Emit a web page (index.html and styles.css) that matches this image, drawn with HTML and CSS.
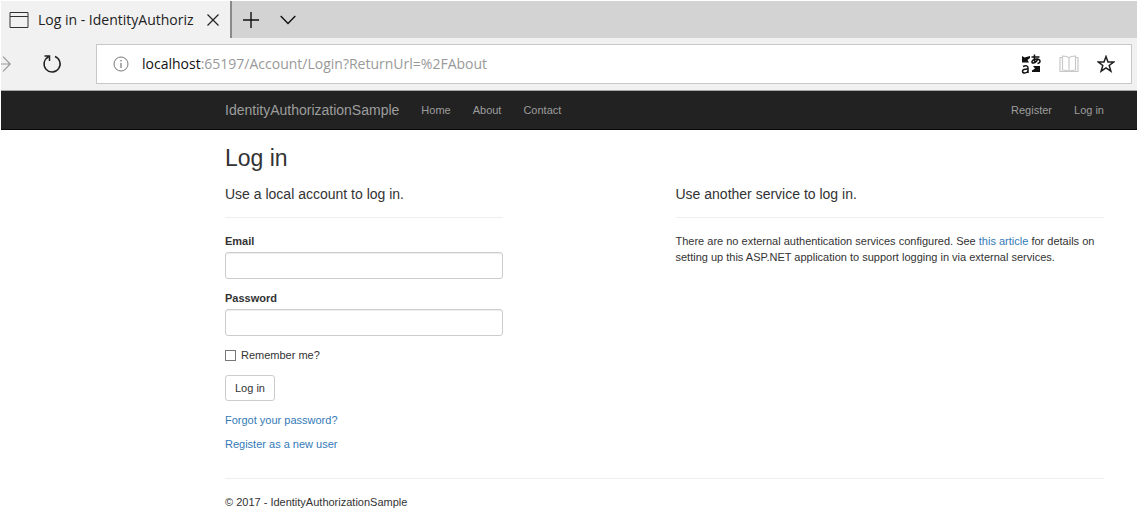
FILE: index.html
```html
<!DOCTYPE html>
<html lang="en">
<head>
<meta charset="utf-8">
<meta name="viewport" content="width=device-width, initial-scale=1">
<title>Log in - IdentityAuthorizationSample</title>
<link rel="stylesheet" href="styles.css">
</head>
<body>
<header class="browser">
  <div class="tabs">
    <div class="tab">
      <svg class="tab-icon" width="20" height="16" viewBox="0 0 20 16" fill="none" stroke="#333"><path d="M1 .5h18v15H1zM1 4.500h18"/></svg>
      <span class="tab-title">Log in - IdentityAuthorizationSample</span>
      <button class="icon-button" aria-label="Close tab"><svg width="12" height="12" viewBox="0 0 12 12" fill="none" stroke="#222" stroke-width="1.200"><path d="M.5.5l11 11M11.500.5l-11 11"/></svg></button>
    </div>
    <button class="icon-button new-tab" aria-label="New tab"><svg width="16" height="16" viewBox="0 0 16 16" fill="none" stroke="#111" stroke-width="1.400"><path d="M8 0v16M0 8h16"/></svg></button>
    <button class="icon-button tab-list" aria-label="Tab list"><svg width="16" height="10" viewBox="0 0 16 10" fill="none" stroke="#111" stroke-width="1.400"><path d="M.7 1L8 8.500 15.300 1"/></svg></button>
  </div>
  <div class="toolbar">
    <button class="icon-button forward" aria-label="Forward"><svg width="10" height="16" viewBox="0 0 10 16" fill="none" stroke="#999" stroke-width="1.200"><path d="M0 8h9M2 .7L9.200 8 2 15.300"/></svg></button>
    <button class="icon-button reload" aria-label="Refresh"><svg width="20" height="20" viewBox="0 0 20 20" fill="none" stroke="#222" stroke-width="1.500"><path d="M13 2.500a8 8 0 1 1-6.500.3M2.500 2h5v5"/></svg></button>
    <div class="address">
      <svg width="16" height="16" viewBox="0 0 16 16" fill="none" stroke="#777"><circle cx="8" cy="8" r="7"/><path d="M8 7v5M8 4v1.500" stroke-width="1.200"/></svg>
      <span class="url"><span class="host">localhost</span>:65197/Account/Login?ReturnUrl=%2FAbout</span>
      <button class="icon-button" aria-label="Translate"><svg width="20" height="20" viewBox="0 0 20 20" fill="none" stroke="#111" stroke-width="1.500"><path d="M1 2l2.500 1.500L9 2v2L6.500 6 8 8.500H1zM19 18h-8v-1.500l3-2-2-2.500h7z" fill="#111" stroke="none"/><path d="M10.500 3h8M13.500 .5q-.5 4 .5 8M17 4.500q-1.500 4-4.500 4.500-2 0-1.500-1.500 1-2.500 5-2.500 3 .2 3 2.300 0 1.700-2.500 2.200M2 12.500q5-2 5 1.500v5M7 15q-5.500-.2-5.500 2.200 0 1.800 2.200 1.800Q6 19 7 17"/></svg></button>
      <button class="icon-button reading" aria-label="Reading view"><svg width="20" height="18" viewBox="0 0 20 18" fill="none" stroke="#c8c8c8" stroke-width="1.200"><path d="M10 3v14M10 3Q8.500 1 3.500 1v14Q8.500 15 10 17M10 3Q11.500 1 16.500 1v14Q11.500 15 10 17M3.500 2.500H1v14h18v-14h-2.500"/></svg></button>
      <button class="icon-button" aria-label="Add to favorites"><svg width="18" height="18" viewBox="0 0 18 18" fill="none" stroke="#222" stroke-width="1.500"><path d="M9 1.500l2 5.400h5.800l-4.600 3.600 1.700 5.700L9 12.800l-4.900 3.400 1.700-5.700L1.200 6.900H7z"/></svg></button>
    </div>
  </div>
</header>
<nav class="navbar">
  <a class="brand" href="#">IdentityAuthorizationSample</a>
  <a href="#">Home</a>
  <a href="#">About</a>
  <a href="#">Contact</a>
  <a class="push" href="#">Register</a>
  <a href="#">Log in</a>
</nav>
<main class="content">
  <h2>Log in</h2>
  <div class="columns">
    <form class="login">
      <h4>Use a local account to log in.</h4>
      <hr>
      <div class="field"><label for="email">Email</label><input class="text-box" id="email" type="email"></div>
      <div class="field"><label for="password">Password</label><input class="text-box" id="password" type="password"></div>
      <div class="remember"><input id="remember" type="checkbox"><label for="remember">Remember me?</label></div>
      <button class="submit" type="button">Log in</button>
      <p><a href="#">Forgot your password?</a></p>
      <p><a href="#">Register as a new user</a></p>
    </form>
    <section>
      <h4>Use another service to log in.</h4>
      <hr>
      <p>There are no external authentication services configured. See <a href="#">this article</a> for details on setting up this ASP.NET application to support logging in via external services.</p>
    </section>
  </div>
  <hr class="footer-line">
  <footer>© 2017 - IdentityAuthorizationSample</footer>
</main>
</body>
</html>
```
FILE: styles.css
```css
* { box-sizing: border-box; }
body {
  margin: 0;
  padding: 1px 0 0 1px;
  background: #fff;
  color: #333;
  font: 11px/16px "Liberation Sans", Arial, sans-serif;
}
a { color: #337ab7; text-decoration: none; }
button, input { font: inherit; color: inherit; }
svg { display: block; flex: none; }

.browser { font: 14px/20px "Open Sans", "Segoe UI", sans-serif; }
.icon-button { flex: none; padding: 0; border: 0; background: none; }
.tabs { display: flex; align-items: center; height: 37px; background: #d3d3d3; }
.tab {
  display: flex;
  align-items: center;
  width: 231px;
  height: 100%;
  padding: 0 11px 0 8px;
  border-right: 2px solid #8a8a8a;
  background: #f1f1f1;
  color: #222;
}
.tab-title { flex: 1; margin: 0 13px 0 9px; overflow: hidden; white-space: nowrap; }
.new-tab { margin-left: 11px; }
.tab-list { margin-left: 21px; }
.toolbar {
  display: flex;
  align-items: center;
  padding: 6px 5px 6px 0;
  border-bottom: 1px solid #a5a9a8;
  background: #f1f1f1;
}
.reload { margin-left: 31px; }
.address {
  display: flex;
  flex: 1;
  align-items: center;
  height: 40px;
  margin-left: 34px;
  padding: 0 16px;
  border: 1px solid #c8c8c8;
  background: #fff;
}
.url { flex: 1; margin-left: 13px; color: #999; }
.host { color: #111; }
.reading { margin: 0 18px; }

.navbar {
  display: flex;
  align-items: center;
  gap: 22px;
  height: 39px;
  padding: 0 33px 0 224px;
  border-bottom: 1px solid #080808;
  background: #222;
}
.navbar a { color: #9d9d9d; }
.navbar .brand { font-size: 14px; }
.navbar .push { margin-left: auto; }

.content { padding: 15px 33px 16px 224px; }
h2 { margin: 0 0 15px; font-size: 23px; font-weight: 400; line-height: 26px; }
h4 { margin: 0; font-size: 14px; font-weight: 400; line-height: 16px; }
hr { margin: 15px 0; border: 0; border-top: 1px solid #eee; }
p { margin: 0 0 8px; }
.columns { display: grid; grid-template-columns: 1fr 1fr; gap: 22px; }
.login { max-width: 278px; }
.field { margin-bottom: 11px; }
.field label { display: block; margin-bottom: 3px; font-weight: 700; }
.text-box {
  display: block;
  width: 100%;
  height: 27px;
  padding: 4px 9px;
  border: 1px solid #ccc;
  border-radius: 3px;
  box-shadow: inset 0 1px 1px #eee;
}
.remember { display: flex; align-items: center; gap: 5px; margin-bottom: 12px; }
.remember input {
  width: 11px;
  height: 11px;
  margin: 0;
  appearance: none;
  border: 1px solid #777;
  background: #fff;
}
.submit {
  display: block;
  margin-bottom: 11px;
  padding: 4px 9px;
  border: 1px solid #ccc;
  border-radius: 3px;
  background: #fff;
}
.footer-line { margin-top: 18px; }
```
